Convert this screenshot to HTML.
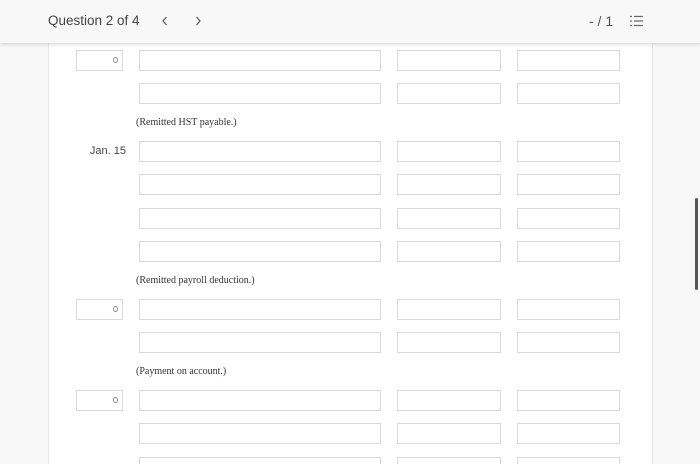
<!DOCTYPE html>
<html><head><style>
html,body{margin:0;width:700px;height:464px;overflow:hidden}
body{background:#f8f8f8;font-family:"Liberation Sans",sans-serif;position:relative}
.hdr{position:absolute;left:0;top:0;width:700px;height:43px;background:#f8f8f8;box-shadow:0 1px 4px rgba(0,0,0,.18);z-index:2}
.panel{position:absolute;left:48px;top:0;width:603px;height:464px;background:#fff;border-left:1px solid #e6e6e6;border-right:1px solid #e6e6e6}
.b{position:absolute;border:1px solid #d9d9d9;background:#fff;box-sizing:border-box;height:21px}
.lbl{position:absolute;left:136px;font-family:"Liberation Serif",serif;font-size:10px;color:#333}
.sel::after{content:"";position:absolute;right:4px;top:6px;width:5px;height:6px;border:1px solid #888;border-radius:50%;box-sizing:border-box}
</style></head><body>
<div class="hdr">
<div style="position:absolute;left:48px;top:13px;font-size:13.5px;color:#444">Question 2 of 4</div>
<svg style="position:absolute;left:161px;top:16px" width="8" height="10"><path d="M5.5 1 L2 5 L5.5 9" fill="none" stroke="#555" stroke-width="1.2"/></svg>
<svg style="position:absolute;left:194px;top:16px" width="8" height="10"><path d="M2.5 1 L6 5 L2.5 9" fill="none" stroke="#555" stroke-width="1.2"/></svg>
<div style="position:absolute;left:589px;top:13px;font-size:14px;color:#555">- / 1</div>
<svg style="position:absolute;left:630px;top:15px" width="14" height="12"><g stroke="#666" stroke-width="1.2"><line x1="4" y1="1.5" x2="13" y2="1.5"/><line x1="4" y1="6" x2="13" y2="6"/><line x1="4" y1="10.5" x2="13" y2="10.5"/><line x1="0" y1="1.5" x2="2" y2="1.5"/><line x1="0" y1="6" x2="2" y2="6"/><line x1="0" y1="10.5" x2="2" y2="10.5"/></g></svg>
</div>
<div class="panel"></div>
<div style="position:absolute;left:695px;top:198px;width:3px;height:92px;background:#555;border-radius:2px"></div>
<div class="lbl" style="top:117px">(Remitted HST payable.)</div>
<div class="lbl" style="top:275px">(Remitted payroll deduction.)</div>
<div class="lbl" style="top:366px">(Payment on account.)</div>
<div style="position:absolute;left:80px;top:145px;width:46px;text-align:right;font-size:11px;color:#444">Jan. 15</div>

<div class="b sel" style="left:76px;top:50px;width:47px"></div>
<div class="b sel" style="left:76px;top:299px;width:47px"></div>
<div class="b sel" style="left:76px;top:390px;width:47px"></div>

<div class="b" style="left:139px;top:50px;width:242px"></div><div class="b" style="left:397px;top:50px;width:104px"></div><div class="b" style="left:517px;top:50px;width:103px"></div>
<div class="b" style="left:139px;top:83px;width:242px"></div><div class="b" style="left:397px;top:83px;width:104px"></div><div class="b" style="left:517px;top:83px;width:103px"></div>
<div class="b" style="left:139px;top:141px;width:242px"></div><div class="b" style="left:397px;top:141px;width:104px"></div><div class="b" style="left:517px;top:141px;width:103px"></div>
<div class="b" style="left:139px;top:174px;width:242px"></div><div class="b" style="left:397px;top:174px;width:104px"></div><div class="b" style="left:517px;top:174px;width:103px"></div>
<div class="b" style="left:139px;top:208px;width:242px"></div><div class="b" style="left:397px;top:208px;width:104px"></div><div class="b" style="left:517px;top:208px;width:103px"></div>
<div class="b" style="left:139px;top:241px;width:242px"></div><div class="b" style="left:397px;top:241px;width:104px"></div><div class="b" style="left:517px;top:241px;width:103px"></div>
<div class="b" style="left:139px;top:299px;width:242px"></div><div class="b" style="left:397px;top:299px;width:104px"></div><div class="b" style="left:517px;top:299px;width:103px"></div>
<div class="b" style="left:139px;top:332px;width:242px"></div><div class="b" style="left:397px;top:332px;width:104px"></div><div class="b" style="left:517px;top:332px;width:103px"></div>
<div class="b" style="left:139px;top:390px;width:242px"></div><div class="b" style="left:397px;top:390px;width:104px"></div><div class="b" style="left:517px;top:390px;width:103px"></div>
<div class="b" style="left:139px;top:423px;width:242px"></div><div class="b" style="left:397px;top:423px;width:104px"></div><div class="b" style="left:517px;top:423px;width:103px"></div>
<div class="b" style="left:139px;top:457px;width:242px;height:7px;border-bottom:0"></div><div class="b" style="left:397px;top:457px;width:104px;height:7px;border-bottom:0"></div><div class="b" style="left:517px;top:457px;width:103px;height:7px;border-bottom:0"></div>
</body></html>
